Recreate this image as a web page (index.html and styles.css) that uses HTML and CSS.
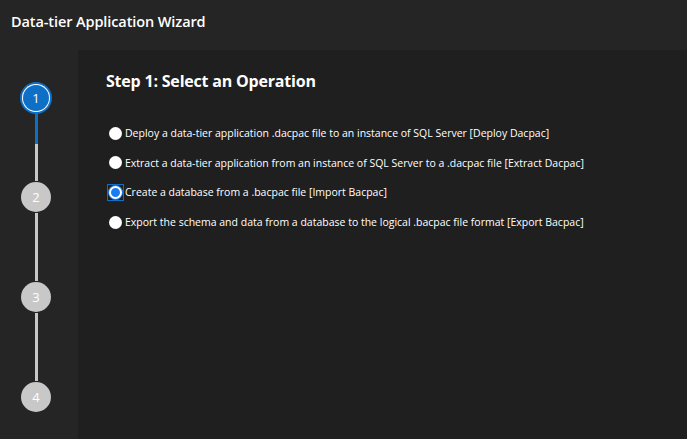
FILE: index.html
```html
<!DOCTYPE html>
<html>
<head>
<meta charset="utf-8">
<link rel="stylesheet" href="styles.css">
</head>
<body>
<div class="app">
  <header class="header">Data-tier Application Wizard</header>
  <div class="main">
    <nav class="steps">
      <div class="step active"><span class="dot">1</span></div>
      <div class="seg seg-first"><span class="seg-blue"></span></div>
      <div class="step"><span class="dot">2</span></div>
      <div class="seg"></div>
      <div class="step"><span class="dot">3</span></div>
      <div class="seg"></div>
      <div class="step"><span class="dot">4</span></div>
    </nav>
    <section class="content">
      <h1 class="title">Step 1: Select an Operation</h1>
      <div class="options">
        <label class="opt"><span class="radio"></span><span>Deploy a data-tier application .dacpac file to an instance of SQL Server [Deploy Dacpac]</span></label>
        <label class="opt"><span class="radio"></span><span>Extract a data-tier application from an instance of SQL Server to a .dacpac file [Extract Dacpac]</span></label>
        <label class="opt"><span class="radio-wrap"><span class="radio checked"></span></span><span>Create a database from a .bacpac file [Import Bacpac]</span></label>
        <label class="opt"><span class="radio"></span><span>Export the schema and data from a database to the logical .bacpac file format [Export Bacpac]</span></label>
      </div>
    </section>
  </div>
</div>
</body>
</html>
```
FILE: styles.css
```css
html, body {
  margin: 0;
  padding: 0;
  background: #252526;
}
.app {
  width: 687px;
  height: 439px;
  overflow: hidden;
  display: flex;
  flex-direction: column;
  font-family: "Open Sans", "Noto Sans", sans-serif;
  color: #ffffff;
  background: #252526;
}
.header {
  height: 50px;
  box-sizing: border-box;
  padding: 12px 0 0 11px;
  font-size: 14.5px;
  font-weight: 600;
  letter-spacing: -0.1px;
}
.main {
  flex: 1;
  display: flex;
}
.steps {
  width: 78px;
  flex: none;
  display: flex;
  flex-direction: column;
  align-items: center;
  padding: 32px 6px 0 0;
  box-sizing: border-box;
}
.step {
  width: 32px;
  height: 32px;
  display: flex;
  align-items: center;
  justify-content: center;
}
.dot {
  width: 30px;
  height: 30px;
  border-radius: 50%;
  background: #c8c8c8;
  color: #ffffff;
  font-size: 13px;
  display: flex;
  align-items: center;
  justify-content: center;
}
.step.active .dot {
  width: 26px;
  height: 26px;
  background: #0e6fc6;
  box-shadow: 0 0 0 1px #ffffff, 0 0 0 3px #0e6fc6;
}
.seg {
  width: 3px;
  height: 68px;
  background: #c8c8c8;
}
.seg-first {
  height: 67px;
  display: flex;
  flex-direction: column;
}
.seg-blue {
  height: 30px;
  background: #0e6fc6;
}
.content {
  flex: 1;
  background: #1f1f1f;
  padding: 20px 0 0 28px;
}
.title {
  margin: 0 0 31px 0;
  font-size: 16px;
  font-weight: 700;
  letter-spacing: -0.2px;
}
.options {
  display: flex;
  flex-direction: column;
  gap: 9.7px;
}
.opt {
  display: flex;
  align-items: center;
  height: 20px;
  font-size: 10.5px;
  gap: 3px;
  color: #ffffff;
}
.radio {
  width: 13px;
  height: 13px;
  border-radius: 50%;
  background: #ffffff;
  box-sizing: border-box;
  margin-left: 3px;
}
.radio-wrap {
  width: 17px;
  height: 17px;
  box-sizing: border-box;
  border: 1px solid #0e6fc6;
  display: flex;
  align-items: center;
  justify-content: center;
  margin-left: 1px;
  margin-right: -2px;
}
.radio-wrap .radio {
  margin-left: 0;
}
.radio.checked {
  background: #1a7cf0;
  border: 2px solid #ffffff;
  box-shadow: 0 0 0 1px #1a7cf0;
}
```
